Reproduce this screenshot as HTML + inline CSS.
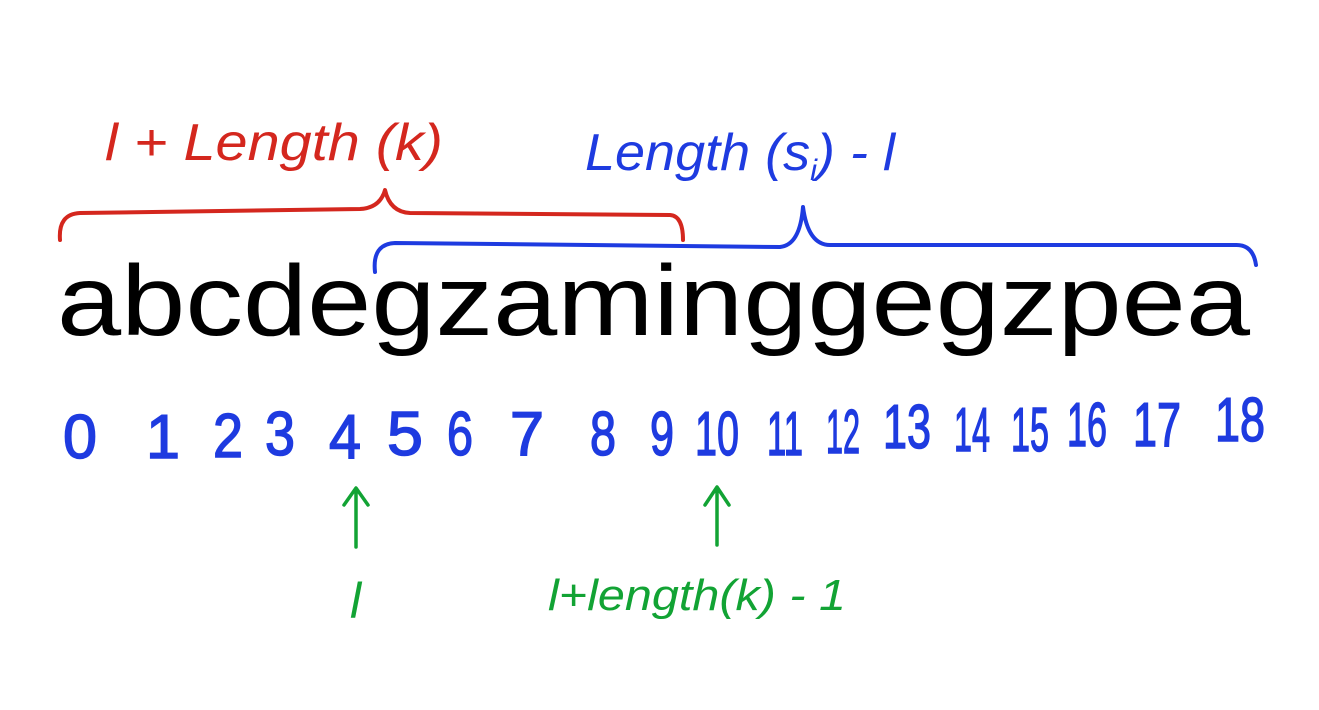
<!DOCTYPE html>
<html><head><meta charset="utf-8"><style>
html,body{margin:0;padding:0;background:#fff;width:1319px;height:710px;overflow:hidden}
</style></head><body>
<svg width="1319" height="710" viewBox="0 0 1319 710" xmlns="http://www.w3.org/2000/svg">
<g fill="none" stroke-linecap="round" stroke-linejoin="round">
<path d="M60 240 Q58 214 80 213 L360 209 Q380 208 385 190 Q390 212 410 213 L670 215 Q683 216 683 240" stroke="#d4271e" stroke-width="4"/>
<path d="M375 272 Q372 244 395 243 L780 247 Q800 245 803 207 Q808 245 830 245 L1235 245 Q1253 244 1256 265" stroke="#1e3be0" stroke-width="4"/>
<path d="M356 547 L356 490 M344 505 L356 488 L368 505" stroke="#12a334" stroke-width="3.5"/>
<path d="M717 545 L717 490 M705 505 L717 487 L729 505" stroke="#12a334" stroke-width="3.5"/>
</g>
<text x="57" y="335" font-family="Liberation Sans, sans-serif" font-size="100" fill="#000" textLength="1193" lengthAdjust="spacingAndGlyphs">abcdegzaminggegzpea</text>
<g font-family="Liberation Sans, sans-serif" font-style="italic">
<text x="105" y="160" font-size="52" fill="#d4271e" textLength="338" lengthAdjust="spacingAndGlyphs">l + Length (k)</text>
<text x="585" y="170" font-size="52" fill="#1e3be0" textLength="310" lengthAdjust="spacingAndGlyphs">Length (s<tspan font-size="30" dy="10">i</tspan><tspan dy="-10">) - l</tspan></text>
<text x="350" y="618" font-size="50" fill="#12a334">l</text>
<text x="548" y="610" font-size="44" fill="#12a334" textLength="298" lengthAdjust="spacingAndGlyphs">l+length(k) - 1</text>
</g>
<g font-family="Liberation Sans, sans-serif" font-size="62" fill="#1e3be0" text-anchor="middle" stroke="#1e3be0" stroke-width="1.5">
<text x="80" y="458" textLength="34" lengthAdjust="spacingAndGlyphs">0</text>
<text x="163" y="458" textLength="34" lengthAdjust="spacingAndGlyphs">1</text>
<text x="228" y="457" textLength="30" lengthAdjust="spacingAndGlyphs">2</text>
<text x="280" y="455" textLength="30" lengthAdjust="spacingAndGlyphs">3</text>
<text x="345" y="458" textLength="32" lengthAdjust="spacingAndGlyphs">4</text>
<text x="405" y="455" textLength="36" lengthAdjust="spacingAndGlyphs">5</text>
<text x="460" y="455" textLength="26" lengthAdjust="spacingAndGlyphs">6</text>
<text x="527" y="455" textLength="34" lengthAdjust="spacingAndGlyphs">7</text>
<text x="603" y="455" textLength="26" lengthAdjust="spacingAndGlyphs">8</text>
<text x="662" y="455" textLength="24" lengthAdjust="spacingAndGlyphs">9</text>
<text x="717" y="455" textLength="44" lengthAdjust="spacingAndGlyphs">10</text>
<text x="785" y="455" textLength="36" lengthAdjust="spacingAndGlyphs">11</text>
<text x="843" y="453" textLength="34" lengthAdjust="spacingAndGlyphs">12</text>
<text x="907" y="448" textLength="48" lengthAdjust="spacingAndGlyphs">13</text>
<text x="972" y="451" textLength="36" lengthAdjust="spacingAndGlyphs">14</text>
<text x="1030" y="451" textLength="38" lengthAdjust="spacingAndGlyphs">15</text>
<text x="1087" y="446" textLength="40" lengthAdjust="spacingAndGlyphs">16</text>
<text x="1157" y="446" textLength="48" lengthAdjust="spacingAndGlyphs">17</text>
<text x="1240" y="441" textLength="50" lengthAdjust="spacingAndGlyphs">18</text>
</g>
</svg>
</body></html>
